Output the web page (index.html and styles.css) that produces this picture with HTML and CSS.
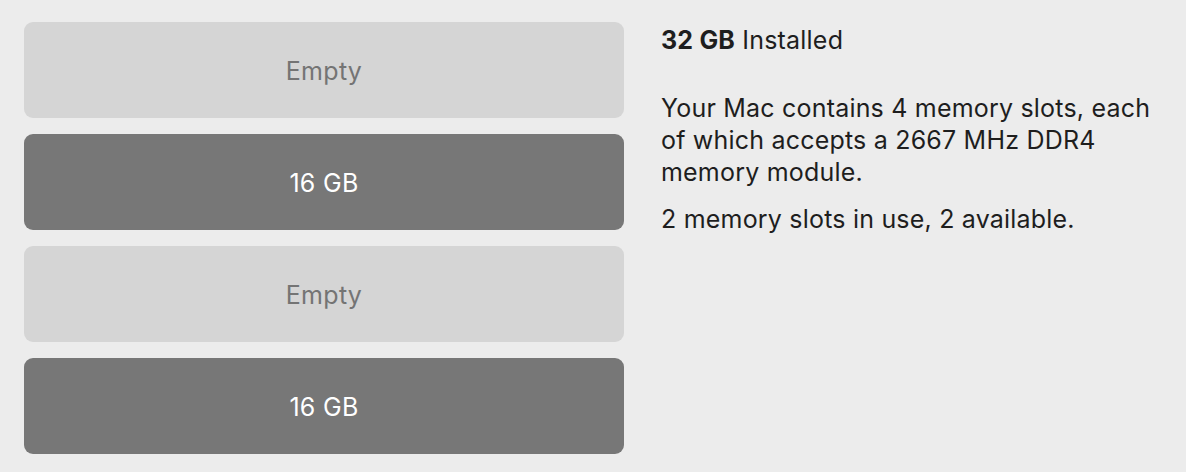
FILE: index.html
```html
<!DOCTYPE html>
<html>
<head>
<meta charset="utf-8">
<link rel="stylesheet" href="styles.css">
</head>
<body>
<div class="page">
  <div class="slots">
    <div class="slot empty">Empty</div>
    <div class="slot full">16 GB</div>
    <div class="slot empty">Empty</div>
    <div class="slot full">16 GB</div>
  </div>
  <div class="info">
    <div class="total"><b>32 GB</b> Installed</div>
    <p class="desc">Your Mac contains 4 memory slots, each of which accepts a 2667 MHz DDR4 memory module.</p>
    <p class="usage">2 memory slots in use, 2 available.</p>
  </div>
</div>
</body>
</html>
```

FILE: styles.css
```css
html, body {
  margin: 0;
  padding: 0;
  background: #ececec;
}
body {
  font-family: Inter, "Noto Sans", "Liberation Sans", sans-serif;
  color: #1e1e1e;
}
.page {
  display: flex;
  padding: 22px 24px;
}
.slots {
  display: flex;
  flex-direction: column;
  gap: 16px;
  width: 600px;
  flex: none;
}
.slot {
  height: 96px;
  border-radius: 9px;
  display: flex;
  align-items: center;
  justify-content: center;
  font-size: 25px;
  letter-spacing: 0.3px;
  padding-top: 2px;
  box-sizing: border-box;
}
.empty {
  background: #d5d5d5;
  color: #747474;
}
.full {
  background: #777777;
  color: #ffffff;
}
.info {
  padding-left: 37px;
  width: 505px;
  font-size: 25px;
  line-height: 32px;
  letter-spacing: 0.2px;
}
.total {
  margin-top: 2px;
}
.total b {
  font-weight: 700;
}
.desc {
  margin: 36px 0 0 0;
}
.usage {
  margin: 15px 0 0 0;
}
```
